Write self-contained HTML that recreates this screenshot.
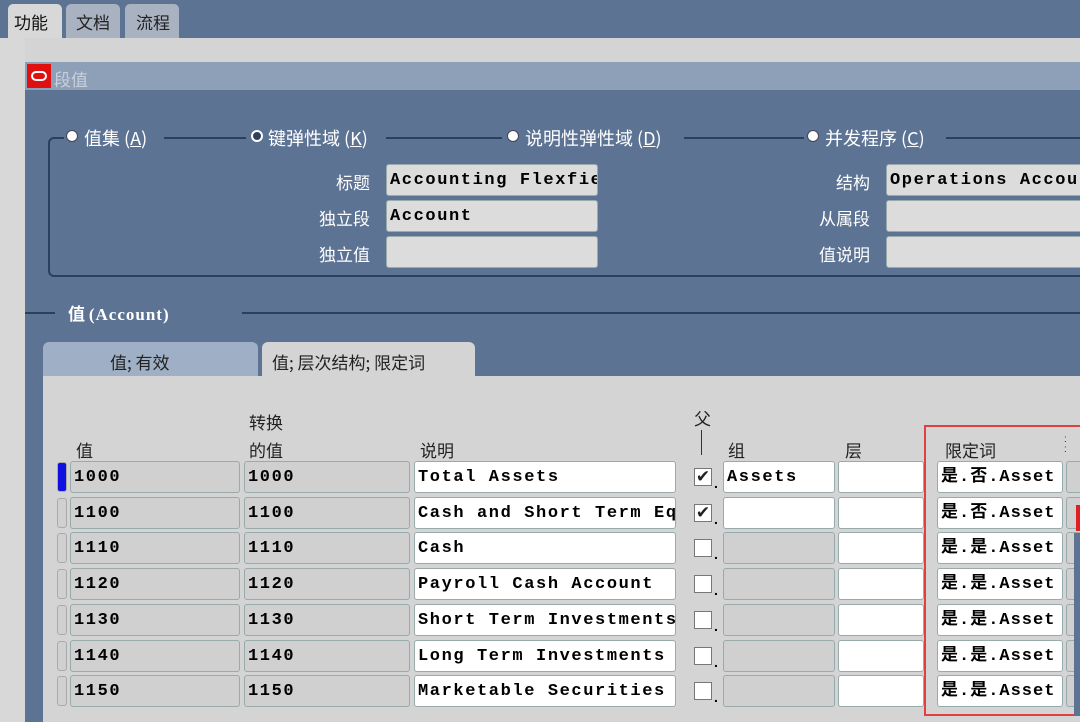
<!DOCTYPE html><html><head><meta charset="utf-8"><style>
*{margin:0;padding:0;box-sizing:border-box}
body{width:1080px;height:722px;overflow:hidden;background:#5d7394;position:relative;font-family:"Liberation Sans","Noto Sans CJK SC",sans-serif}
.a{position:absolute}
.cj{font-family:"Noto Sans CJK SC",sans-serif;font-size:17px;color:#fff}
.f{position:absolute;background:#dcdcdc;border:1px solid #9aa;border-radius:3px;font-family:"Liberation Mono",monospace;font-weight:bold;font-size:17px;letter-spacing:1.6px;color:#000;padding:4px 3px 2px;white-space:nowrap;overflow:hidden;line-height:24px}
.w{background:#fff}
.g{background:#d0d0d0}
.h{position:absolute;font-family:"Noto Sans CJK SC",sans-serif;font-size:17px;color:#222}
.cb{position:absolute;width:18px;height:18px;border:1px solid #777;background:#fff;font-size:17px;line-height:16px;text-align:center;color:#222}
.dot{position:absolute;width:12px;height:12px;border-radius:50%;background:#fff;border:1px solid #445}
</style></head><body>
<div class="a" style="left:8px;top:4px;width:54px;height:36px;background:#d8d8d8;border-radius:5px 5px 0 0"></div>
<div class="a cj" style="left:14px;top:9px;color:#111">功能</div>
<div class="a" style="left:66px;top:4px;width:54px;height:34px;background:#a9b2c1;border-radius:5px 5px 0 0"></div>
<div class="a cj" style="left:76px;top:9px;color:#222">文档</div>
<div class="a" style="left:125px;top:4px;width:54px;height:34px;background:#a9b2c1;border-radius:5px 5px 0 0"></div>
<div class="a cj" style="left:136px;top:9px;color:#222">流程</div>
<div class="a" style="left:0;top:38px;width:1080px;height:24px;background:#d4d4d4"></div>
<div class="a" style="left:0;top:38px;width:25px;height:684px;background:#d8d8d8"></div>
<div class="a" style="left:25px;top:62px;width:1055px;height:28px;background:#8e9fb8"></div>
<div class="a" style="left:27px;top:64px;width:24px;height:24px;background:#e01010"></div>
<div class="a" style="left:31px;top:71px;width:16px;height:10px;border:2px solid #fff;border-radius:5px"></div>
<div class="a cj" style="left:54px;top:66px;color:#c8d0dc">段值</div>
<div class="a" style="left:48px;top:137px;width:1040px;height:140px;border:2px solid #2c3f5c;border-radius:6px"></div>
<div class="a" style="left:64px;top:128px;width:100px;height:20px;background:#5d7394"></div>
<div class="a" style="left:246px;top:128px;width:140px;height:20px;background:#5d7394"></div>
<div class="a" style="left:502px;top:128px;width:182px;height:20px;background:#5d7394"></div>
<div class="a" style="left:804px;top:128px;width:142px;height:20px;background:#5d7394"></div>
<div class="dot" style="left:66px;top:130px"></div><div class="a cj" style="left:84px;top:125px;font-size:18px">值集 (<u>A</u>)</div>
<div class="dot" style="left:251px;top:130px;background:#2c3f5c;border:2px solid #fff"></div><div class="a cj" style="left:268px;top:125px;font-size:18px">键弹性域 (<u>K</u>)</div>
<div class="dot" style="left:507px;top:130px"></div><div class="a cj" style="left:525px;top:125px;font-size:18px">说明性弹性域 (<u>D</u>)</div>
<div class="dot" style="left:807px;top:130px"></div><div class="a cj" style="left:825px;top:125px;font-size:18px">并发程序 (<u>C</u>)</div>
<div class="a cj" style="left:300px;top:169px;width:70px;text-align:right">标题</div>
<div class="a cj" style="left:300px;top:205px;width:70px;text-align:right">独立段</div>
<div class="a cj" style="left:300px;top:241px;width:70px;text-align:right">独立值</div>
<div class="f" style="left:386px;top:164px;width:212px;height:32px">Accounting Flexfield</div>
<div class="f" style="left:386px;top:200px;width:212px;height:32px">Account</div>
<div class="f" style="left:386px;top:236px;width:212px;height:32px"></div>
<div class="a cj" style="left:800px;top:169px;width:70px;text-align:right">结构</div>
<div class="a cj" style="left:800px;top:205px;width:70px;text-align:right">从属段</div>
<div class="a cj" style="left:800px;top:241px;width:70px;text-align:right">值说明</div>
<div class="f" style="left:886px;top:164px;width:200px;height:32px">Operations Accounting</div>
<div class="f" style="left:886px;top:200px;width:200px;height:32px"></div>
<div class="f" style="left:886px;top:236px;width:200px;height:32px"></div>
<div class="a" style="left:25px;top:312px;width:30px;height:2px;background:#2c3f5c"></div>
<div class="a" style="left:242px;top:312px;width:840px;height:2px;background:#2c3f5c"></div>
<div class="a cj" style="left:68px;top:300px;font-weight:bold">值 <span style="font-family:'Liberation Serif',serif;font-weight:bold;letter-spacing:1px">(Account)</span></div>
<div class="a" style="left:43px;top:342px;width:215px;height:36px;background:#9fb0c6;border-radius:6px 6px 0 0"></div>
<div class="a cj" style="left:110px;top:349px;color:#222">值; 有效</div>
<div class="a" style="left:262px;top:342px;width:213px;height:36px;background:#d4d4d4;border-radius:6px 6px 0 0"></div>
<div class="a cj" style="left:272px;top:349px;color:#222">值; 层次结构; 限定词</div>
<div class="a" style="left:43px;top:376px;width:1037px;height:346px;background:#d4d4d4"></div>
<div class="h" style="left:76px;top:437px">值</div>
<div class="h" style="left:249px;top:409px">转换</div>
<div class="h" style="left:249px;top:437px">的值</div>
<div class="h" style="left:420px;top:437px">说明</div>
<div class="h" style="left:694px;top:405px">父</div>
<div class="a" style="left:701px;top:430px;width:1px;height:25px;background:#333"></div>
<div class="h" style="left:728px;top:437px">组</div>
<div class="h" style="left:845px;top:437px">层</div>
<div class="h" style="left:945px;top:437px">限定词</div>
<div class="a" style="left:1064px;top:435px;font-size:10px;line-height:10px;color:#333">:<br>:</div>
<div class="a" style="left:924px;top:425px;width:160px;height:291px;border:2px solid #e04040"></div>
<div id="rows"></div>
<script>
var d=[["1000","Total Assets",1,"Assets","是.否.Asset"],["1100","Cash and Short Term Equivalents",1,"","是.否.Asset"],["1110","Cash",0,null,"是.是.Asset"],["1120","Payroll Cash Account",0,null,"是.是.Asset"],["1130","Short Term Investments",0,null,"是.是.Asset"],["1140","Long Term Investments",0,null,"是.是.Asset"],["1150","Marketable Securities",0,null,"是.是.Asset"]];
var h="";d.forEach(function(r,i){var y=461+i*35.7;
h+='<div class="a" style="left:57px;top:'+(y+1)+'px;width:10px;height:30px;border-radius:3px;background:'+(i==0?'#1010e0':'#d0d0d0')+';border:1px solid #aaa"></div>';
h+='<div class="f g" style="left:70px;top:'+y+'px;width:170px;height:32px">'+r[0]+'</div>';
h+='<div class="f g" style="left:244px;top:'+y+'px;width:166px;height:32px">'+r[0]+'</div>';
h+='<div class="f w" style="left:414px;top:'+y+'px;width:262px;height:32px">'+r[1]+'</div>';
h+='<div class="cb" style="left:694px;top:'+(y+7)+'px">'+(r[2]?'✔':'')+'</div><div class="a" style="left:714px;top:'+(y+14)+'px;font-weight:bold;font-size:14px">.</div>';
h+='<div class="f '+(r[3]===null?'g':'w')+'" style="left:723px;top:'+y+'px;width:112px;height:32px">'+(r[3]||'')+'</div>';
h+='<div class="f w" style="left:838px;top:'+y+'px;width:86px;height:32px"></div>';
h+='<div class="f w" style="left:937px;top:'+y+'px;width:126px;height:32px;letter-spacing:1px;font-family:\'Liberation Mono\',\'Noto Sans CJK SC\',monospace">'+r[4]+'</div>';
h+='<div class="f g" style="left:1066px;top:'+y+'px;width:20px;height:32px"></div>';});
document.getElementById("rows").innerHTML=h;
</script>
<div class="a" style="left:1076px;top:505px;width:4px;height:26px;background:#e02020"></div>
<div class="a" style="left:1074px;top:533px;width:6px;height:183px;background:#5d7394"></div>
</body></html>
